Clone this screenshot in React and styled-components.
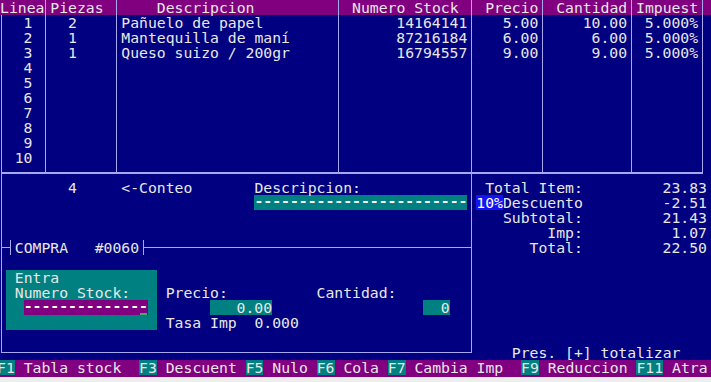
import React from 'react';
import styled, { createGlobalStyle } from 'styled-components';

const CW = 8.8875;
const RH = 15;
const NAVY = '#000080';
const PURPLE = '#800080';
const TEAL = '#008080';
const INK = '#e8e8e8';
const RULE = '#a8a8ec';

const Global = createGlobalStyle`
  html, body { margin: 0; padding: 0; background: #ededed; }
  body { font-family: "DejaVu Sans Mono", "Liberation Mono", monospace; }
`;

const Viewport = styled.div`
  width: 711px;
  height: 382px;
  overflow: hidden;
  background: #ededed;
`;

const Screen = styled.div`
  display: grid;
  grid-template-columns: repeat(80, ${CW}px) 6px;
  grid-template-rows: repeat(24, ${RH}px) 17px;
  margin-left: -3px;
  background: ${NAVY};
  color: ${INK};
  font-size: 14.76px;
  line-height: ${RH}px;
  white-space: pre;
`;

const place = ({ $r, $c, $w = 1, $h = 1 }) => `
  grid-row: ${$r + 1} / span ${$h};
  grid-column: ${$c + 1} / span ${$w};
`;

const HeaderBand = styled.div`
  grid-row: 1;
  grid-column: 1 / -1;
  background: ${PURPLE};
`;

const Label = styled.span`
  ${place};
  text-align: ${({ $align }) => $align || 'left'};
  padding-left: ${({ $inset }) => ($inset ? 3 : 0)}px;
`;

const Field = styled.div`
  ${place};
  background: ${({ $bg }) => $bg || TEAL};
  text-align: right;
`;

const Dashes = styled.span`
  ${place};
  align-self: start;
  line-height: 11px;
  color: #ffffff;
  font-weight: bold;
  overflow: hidden;
`;

const Cursor = styled.i`
  ${place};
  align-self: end;
  height: 2px;
  margin: 0 1px;
  background: #3fae6a;
`;

const Highlight = styled.span`
  ${place};
  background: #1414f0;
  color: #ffffff;
`;

const VRule = styled.i`
  grid-row: ${({ $r1 }) => $r1 + 1} / ${({ $r2 }) => $r2 + 2};
  grid-column: ${({ $c }) => $c + 1};
  justify-self: center;
  width: 1px;
  background: ${RULE};
  margin-top: ${({ $halfTop }) => ($halfTop ? 7 : 0)}px;
  margin-bottom: ${({ $halfBottom }) => ($halfBottom ? 7 : 0)}px;
`;

const HRule = styled.i`
  grid-row: ${({ $r }) => $r + 1};
  grid-column: ${({ $c1 }) => $c1 + 1} / ${({ $c2 }) => $c2 + 2};
  align-self: start;
  margin-top: 7px;
  height: ${({ $thick }) => ($thick ? 2 : 1)}px;
  margin-left: ${CW / 2}px;
  margin-right: ${CW / 2}px;
  background: ${RULE};
`;

const FKeyBar = styled.div`
  grid-row: 25;
  grid-column: 1 / -1;
  display: flex;
  align-items: stretch;
  background: ${PURPLE};
  color: ${INK};
  line-height: 15px;
`;

const FKey = styled.span`
  background: ${TEAL};
  height: 15px;
`;

const FLabel = styled.span``;

const items = [
  { n: 1, pz: '2', desc: 'Pañuelo de papel', stock: '14164141', precio: '5.00', cant: '10.00', imp: '5.000%' },
  { n: 2, pz: '1', desc: 'Mantequilla de maní', stock: '87216184', precio: '6.00', cant: '6.00', imp: '5.000%' },
  { n: 3, pz: '1', desc: 'Queso suizo / 200gr', stock: '16794557', precio: '9.00', cant: '9.00', imp: '5.000%' },
];

const totals = [
  { r: 12, c: 55, label: 'Total Item:', value: '23.83' },
  { r: 13, c: 57, label: 'Descuento', value: '-2.51' },
  { r: 14, c: 57, label: 'Subtotal:', value: '21.43' },
  { r: 15, c: 62, label: 'Imp:', value: '1.07' },
  { r: 16, c: 60, label: 'Total:', value: '22.50' },
];

const fkeys = [
  ['F1', ' Tabla stock  '],
  ['F3', ' Descuent '],
  ['F5', ' Nulo '],
  ['F6', ' Cola '],
  ['F7', ' Cambia Imp  '],
  ['F9', ' Reduccion '],
  ['F11', ' Atra'],
];

const tableBars = [5, 13, 38, 61, 71, 79];

export default function App() {
  return (
    <Viewport>
      <Global />
      <Screen>
        <HeaderBand />

        {/* backgrounds */}
        <Field $r={13} $c={29} $w={24} />
        <Field $r={18} $c={1} $w={17} $h={4} />
        <Field $r={20} $c={3} $w={14} $bg={PURPLE} />
        <Field $r={20} $c={24} $w={7}>0.00</Field>
        <Field $r={20} $c={48} $w={3}>0</Field>

        {/* rules */}
        {tableBars.map((c) => (
          <VRule key={c} $c={c} $r1={0} $r2={11} $halfBottom />
        ))}
        <VRule $c={53} $r1={0} $r2={23} $halfBottom />
        <VRule $c={0} $r1={1} $r2={23} $halfBottom />
        <HRule $r={11} $c1={0} $c2={79} $thick />
        <HRule $r={16} $c1={0} $c2={1} />
        <VRule $c={1} $r1={16} $r2={16} />
        <VRule $c={16} $r1={16} $r2={16} />
        <HRule $r={16} $c1={16} $c2={53} />
        <HRule $r={23} $c1={0} $c2={53} />

        {/* table header */}
        <Label $r={0} $c={0} $w={5} $inset>Linea</Label>
        <Label $r={0} $c={6} $w={6}>Piezas</Label>
        <Label $r={0} $c={18} $w={11}>Descripcion</Label>
        <Label $r={0} $c={40} $w={12}>Numero Stock</Label>
        <Label $r={0} $c={55} $w={6}>Precio</Label>
        <Label $r={0} $c={63} $w={8}>Cantidad</Label>
        <Label $r={0} $c={72} $w={7}>Impuest</Label>

        {/* table lines */}
        {Array.from({ length: 10 }, (_, i) => (
          <Label key={`n${i}`} $r={i + 1} $c={1} $w={3} $align="right">
            {i + 1}
          </Label>
        ))}
        {items.map((it) => (
          <React.Fragment key={it.n}>
            <Label $r={it.n} $c={8}>{it.pz}</Label>
            <Label $r={it.n} $c={14} $w={23}>{it.desc}</Label>
            <Label $r={it.n} $c={44} $w={9} $align="right">{it.stock}</Label>
            <Label $r={it.n} $c={54} $w={7} $align="right">{it.precio}</Label>
            <Label $r={it.n} $c={62} $w={9} $align="right">{it.cant}</Label>
            <Label $r={it.n} $c={72} $w={7} $align="right">{it.imp}</Label>
          </React.Fragment>
        ))}

        {/* lower left */}
        <Label $r={12} $c={8}>4</Label>
        <Label $r={12} $c={14} $w={8}>{'<-Conteo'}</Label>
        <Label $r={12} $c={29} $w={12}>Descripcion:</Label>
        <Dashes $r={13} $c={29} $w={24}>{'-'.repeat(24)}</Dashes>
        <Label $r={16} $c={2} $w={6}>COMPRA</Label>
        <Label $r={16} $c={11} $w={5}>#0060</Label>

        <Label $r={18} $c={2} $w={5}>Entra</Label>
        <Label $r={19} $c={2} $w={13}>Numero Stock:</Label>
        <Dashes $r={20} $c={3} $w={14}>{'-'.repeat(14)}</Dashes>
        <Cursor $r={20} $c={16} />
        <Label $r={19} $c={19} $w={7}>Precio:</Label>
        <Label $r={19} $c={36} $w={9}>Cantidad:</Label>
        <Label $r={21} $c={19} $w={15}>Tasa Imp  0.000</Label>

        {/* totals */}
        <Highlight $r={13} $c={54} $w={3}>10%</Highlight>
        {totals.map((t) => (
          <React.Fragment key={t.r}>
            <Label $r={t.r} $c={t.c} $w={t.label.length}>{t.label}</Label>
            <Label $r={t.r} $c={72} $w={8} $align="right">{t.value}</Label>
          </React.Fragment>
        ))}
        <Label $r={23} $c={58} $w={19}>Pres. [+] totalizar</Label>

        <FKeyBar>
          {fkeys.map(([k, l]) => (
            <React.Fragment key={k}>
              <FKey>{k}</FKey>
              <FLabel>{l}</FLabel>
            </React.Fragment>
          ))}
        </FKeyBar>
      </Screen>
    </Viewport>
  );
}
